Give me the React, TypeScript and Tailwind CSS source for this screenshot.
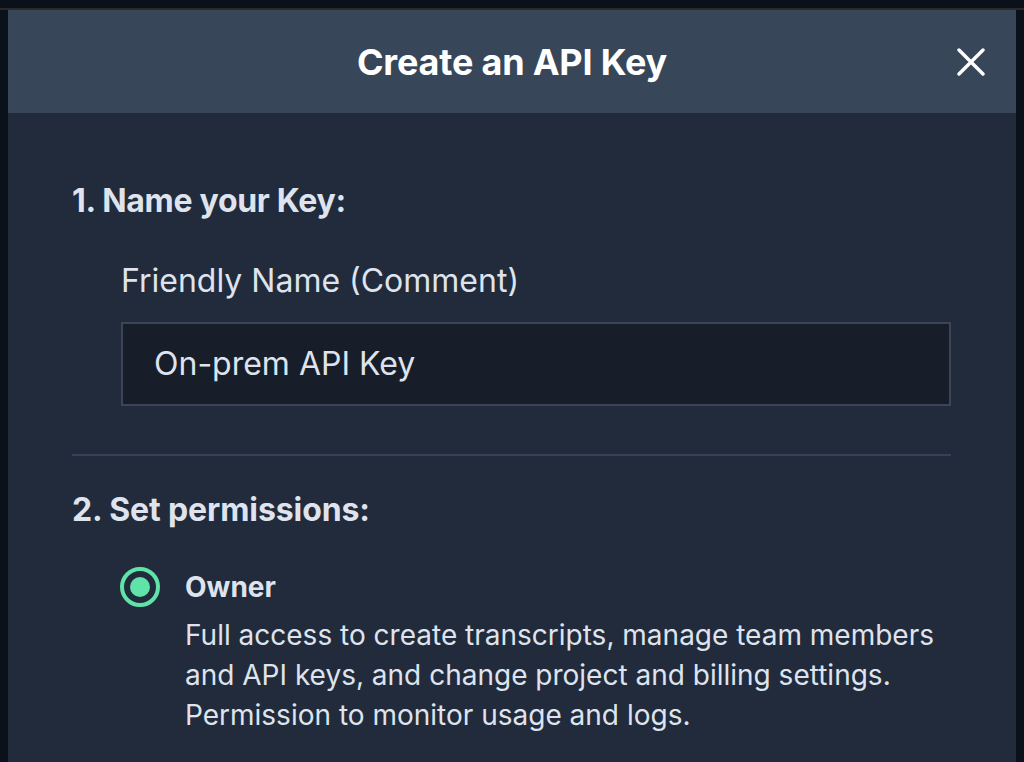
import React from "react";

export default function App() {
  return (
    <div className="w-[1024px] h-[762px] overflow-hidden bg-[#0b111a] flex flex-col" style={{ fontFamily: "Inter, 'Noto Sans', sans-serif" }}>
      <div className="h-[8px] shrink-0 bg-[#0b111a]" />
      <div className="h-[2px] shrink-0 bg-[#2b2a25]" />
      <div className="flex-1 mx-[8px] bg-[#212b3b] flex flex-col">
        <div className="h-[103px] shrink-0 bg-[#384659] relative flex items-center justify-center">
          <h1 className="text-[36px] font-bold text-white tracking-[-0.2px]">Create an API Key</h1>
          <button className="absolute right-[30px] top-1/2 -translate-y-1/2 w-[30px] h-[30px] flex items-center justify-center">
            <svg width="28" height="28" viewBox="0 0 28 28" fill="none" stroke="white" strokeWidth="3.4" strokeLinecap="round">
              <path d="M2 2 L26 26 M26 2 L2 26" />
            </svg>
          </button>
        </div>
        <div className="pl-[64px] pr-[65px] pt-[68px] text-[#dfe3ee]">
          <h2 className="text-[32px] leading-[40px] font-bold tracking-[-0.3px]">1. Name your Key:</h2>
          <div className="pl-[49px] mt-[40px]">
            <label className="block text-[32px] leading-[40px]">Friendly Name (Comment)</label>
            <div className="mt-[21px] h-[84px] border-2 border-[#3a4557] bg-[#181e29] flex items-center pl-[31px] text-[32px]">
              On-prem API Key
            </div>
          </div>
          <div className="mt-[48px] h-[2px] bg-[#36425a]" />
          <h2 className="mt-[34px] text-[32px] leading-[40px] font-bold tracking-[-0.1px]">2. Set permissions:</h2>
          <div className="pl-[48px] mt-[37px] flex gap-[25px]">
            <div className="mt-[0px] w-[40px] h-[40px] rounded-full border-[4px] border-[#5fe3a8] flex items-center justify-center shrink-0">
              <div className="w-[20px] h-[20px] rounded-full bg-[#5fe3a8]" />
            </div>
            <div className="flex-1">
              <div className="text-[28px] leading-[40px] font-bold">Owner</div>
              <p className="mt-[8px] text-[28px] leading-[40px]">
                Full access to create transcripts, manage team members and API keys, and change project and billing settings. Permission to monitor usage and logs.
              </p>
            </div>
          </div>
        </div>
      </div>
    </div>
  );
}
